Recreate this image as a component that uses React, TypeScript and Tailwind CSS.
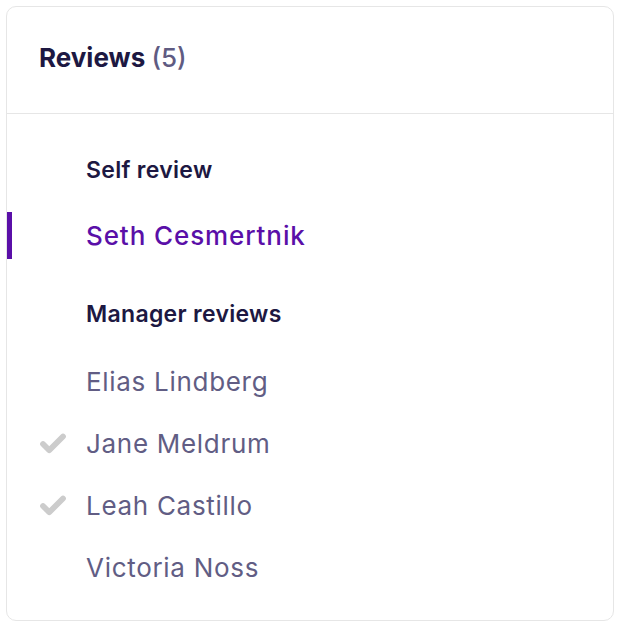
import { Check } from "lucide-react";

type Reviewer = { name: string; done?: boolean; active?: boolean };

const selfReview: Reviewer[] = [{ name: "Seth Cesmertnik", active: true }];

const managerReviews: Reviewer[] = [
  { name: "Elias Lindberg" },
  { name: "Jane Meldrum", done: true },
  { name: "Leah Castillo", done: true },
  { name: "Victoria Noss" },
];

function ReviewerRow({ reviewer }: { reviewer: Reviewer }) {
  return (
    <div className="relative flex h-[47px] items-center">
      {reviewer.active && (
        <span className="absolute left-0 top-0 h-full w-[5px] bg-[#5a0fa8]" />
      )}
      <div className="flex w-[79px] shrink-0 justify-end pr-[18px]">
        {reviewer.done && (
          <Check className="h-[30px] w-[30px] text-[#cccccc]" strokeWidth={4.6} />
        )}
      </div>
      <span
        className={
          reviewer.active
            ? "text-[26px] font-medium tracking-[0.9px] text-[#5a0fa8]"
            : "text-[26px] font-normal tracking-[0.7px] text-[#615d84]"
        }
      >
        {reviewer.name}
      </span>
    </div>
  );
}

export default function App() {
  return (
    <div
      className="bg-white p-[6px]"
      style={{ fontFamily: "Inter, 'Noto Sans', sans-serif" }}
    >
      <div className="h-[615px] w-[608px] rounded-[10px] border border-[#e6e6e6] bg-white">
        <div className="flex h-[107px] items-center border-b border-[#e6e6e6] pb-[6px] pl-[32px]">
          <h2 className="text-[26px] font-bold text-[#1d1842]">
            Reviews <span className="font-medium text-[#5f5b82]">(5)</span>
          </h2>
        </div>

        <div className="pt-[44px]">
          <h3 className="pl-[79px] text-[23px] font-semibold leading-[24px] tracking-[0.3px] text-[#1d1842]">
            Self review
          </h3>
          <div className="mt-[30px]">
            {selfReview.map((r) => (
              <ReviewerRow key={r.name} reviewer={r} />
            ))}
          </div>

          <h3 className="mt-[43px] pl-[79px] text-[23px] font-semibold leading-[24px] tracking-[0.3px] text-[#1d1842]">
            Manager reviews
          </h3>
          <div className="mt-[32px] flex flex-col gap-[15px]">
            {managerReviews.map((r) => (
              <ReviewerRow key={r.name} reviewer={r} />
            ))}
          </div>
        </div>
      </div>
    </div>
  );
}
